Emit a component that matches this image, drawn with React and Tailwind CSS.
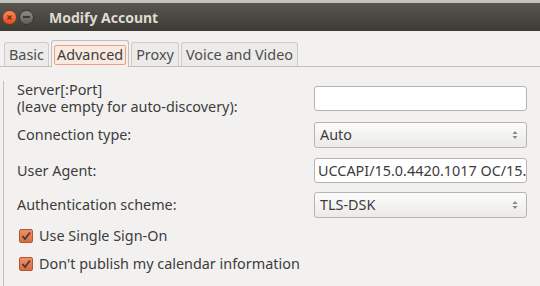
import React from "react";

const font = { fontFamily: '"Noto Sans", "Open Sans", sans-serif' };

const Tab = ({ label, active }) =>
  active ? (
    <div className="h-[27px] -mb-px px-[2px] pt-[4px] border border-b-0 border-[#c3c0bb] rounded-t-[3px] bg-[#f2f1f0] flex items-start">
      <div className="h-[20px] px-[2px] flex items-center border border-[#eba181] rounded-[2px] bg-[#f8e9e1] text-[#3c3c3c]">
        {label}
      </div>
    </div>
  ) : (
    <div className="h-[24px] px-[4px] flex items-center border border-b-0 border-[#cfccc7] rounded-t-[3px] bg-[#ecebe9] text-[#4c4c4c]">
      {label}
    </div>
  );

const Combo = ({ value }) => (
  <div className="w-[213px] h-[26px] flex items-center justify-between pl-[5px] pr-[8px] border border-[#b7b4af] rounded-[3px] bg-gradient-to-b from-[#fcfcfc] to-[#ebeae8] text-[#3c3c3c]">
    <span>{value}</span>
    <svg width="6" height="10" viewBox="0 0 6 10">
      <path d="M3 1 L5.5 4 H0.5 Z" fill="#8a8884" />
      <path d="M3 9 L5.5 6 H0.5 Z" fill="#8a8884" />
    </svg>
  </div>
);

const Check = ({ label }) => (
  <div className="h-[20px] flex items-center gap-[6px] pl-[2px]">
    <div className="w-[14px] h-[14px] rounded-[2px] border border-[#b05a32] bg-gradient-to-b from-[#f0906a] to-[#dc6a3c] flex items-center justify-center">
      <svg width="12" height="12" viewBox="0 0 12 12">
        <path d="M2.5 6 L5 9 L10 2.5" stroke="#4a3a34" strokeWidth="1.8" fill="none" />
      </svg>
    </div>
    <span>{label}</span>
  </div>
);

export default function App() {
  return (
    <div className="w-[540px] h-[286px] overflow-hidden bg-[#f2f1f0] text-[14.4px] text-[#3c3c3c]" style={font}>
      {/* title bar */}
      <div className="h-[3px] bg-[#c4c3bf]" />
      <div className="h-[28px] bg-gradient-to-b from-[#57564f] to-[#3b3a35] flex items-center">
        <div className="ml-[2px] w-[15px] h-[15px] rounded-full bg-gradient-to-b from-[#f58a5c] to-[#df4b1c] border border-[#7a3a22] flex items-center justify-center">
          <svg width="7" height="7" viewBox="0 0 7 7">
            <path d="M1.5 1.5 L5.5 5.5 M5.5 1.5 L1.5 5.5" stroke="#7a2a12" strokeWidth="1.3" />
          </svg>
        </div>
        <div className="ml-[2px] w-[15px] h-[15px] rounded-full bg-gradient-to-b from-[#8d8c87] to-[#5e5d58] border border-[#35342f] flex items-center justify-center">
          <div className="w-[7px] h-[2px] bg-[#3a3934]" />
        </div>
        <span className="ml-[15px] font-bold text-[14px] text-[#dfdbd2]">Modify Account</span>
      </div>

      {/* tabs */}
      <div className="pt-[9px] pl-[4px] flex items-end gap-[2px] border-b border-[#c3c0bb]">
        <Tab label="Basic" />
        <Tab label="Advanced" active />
        <Tab label="Proxy" />
        <Tab label="Voice and Video" />
      </div>

      {/* panel */}
      <div className="ml-[3px] h-[230px] border-l border-[#c3c0bb] pl-[13px]">
        <div className="mt-[14px] h-[34px] flex items-center">
          <div className="w-[297px] leading-[17px]">
            <div>Server[:Port]</div>
            <div>(leave empty for auto-discovery):</div>
          </div>
          <div className="w-[213px] h-[25px] border border-[#b7b4af] rounded-[3px] bg-white" />
        </div>
        <div className="mt-[7px] h-[26px] flex items-center">
          <div className="w-[297px]">Connection type:</div>
          <Combo value="Auto" />
        </div>
        <div className="mt-[10px] h-[25px] flex items-center">
          <div className="w-[297px]">User Agent:</div>
          <div className="w-[213px] h-[25px] pl-[3px] flex items-center overflow-hidden whitespace-nowrap border border-[#b7b4af] rounded-[3px] bg-white">
            UCCAPI/15.0.4420.1017 OC/15.0.4420.1017
          </div>
        </div>
        <div className="mt-[9px] h-[26px] flex items-center">
          <div className="w-[297px]">Authentication scheme:</div>
          <Combo value="TLS-DSK" />
        </div>
        <div className="mt-[8px]">
          <Check label="Use Single Sign-On" />
        </div>
        <div className="mt-[8px]">
          <Check label="Don't publish my calendar information" />
        </div>
      </div>
    </div>
  );
}
